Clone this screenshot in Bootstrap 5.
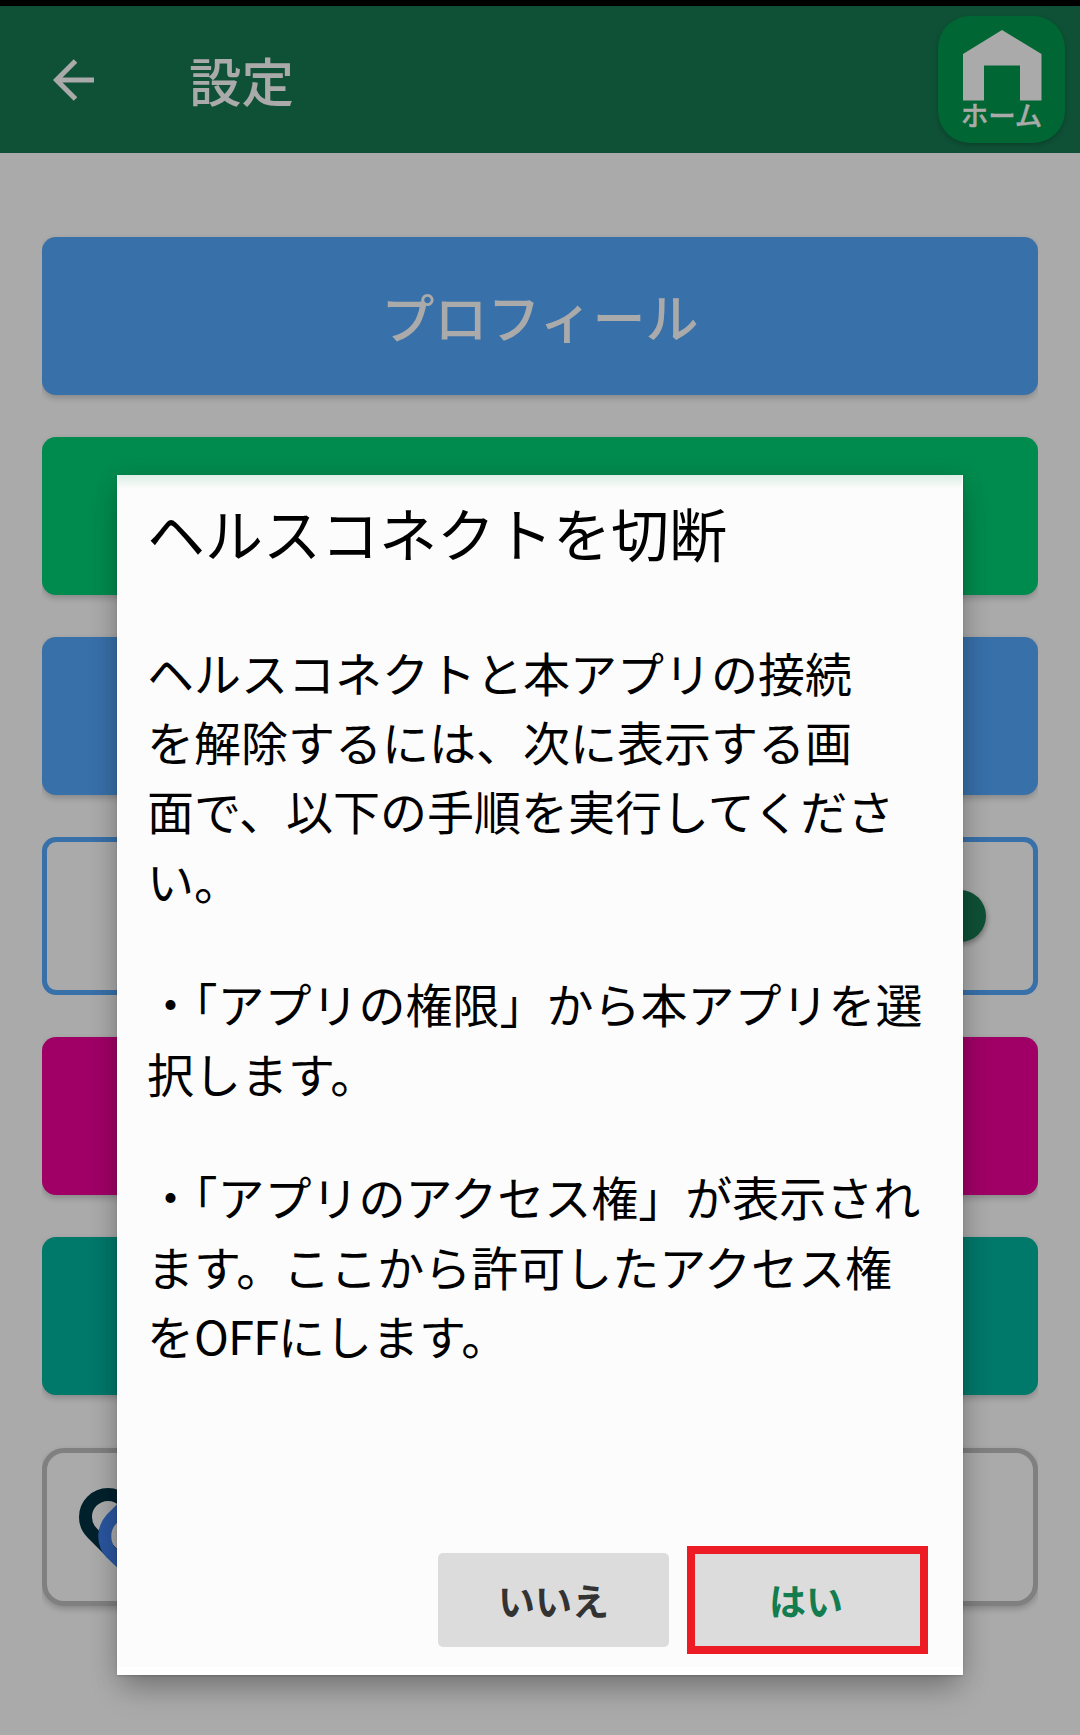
<!DOCTYPE html>
<html lang="ja">
<head>
<meta charset="utf-8">
<meta name="viewport" content="width=device-width, initial-scale=1">
<title>設定</title>
<link href="https://cdn.jsdelivr.net/npm/bootstrap@5.3.0/dist/css/bootstrap.min.css" rel="stylesheet">
<style>
body{font-family:"Noto Sans CJK JP",sans-serif;background:#aaa;height:1735px;overflow:hidden}
.status-strip{height:6px;background:#000}
.app-bar{height:147px;background:#0f5136;color:#aaa;padding:10px 15px 10px 52px}
.app-title{font-size:52.5px;line-height:60px;font-weight:500;margin-left:95px;padding-bottom:1px}
.home-btn{width:127px;height:127px;border-radius:32px;background:#063;box-shadow:0 2px 5px rgba(0,0,0,.22);color:#aaa}
.home-btn svg{margin-top:14px;display:block}
.home-label{font-size:27.5px;line-height:26px;font-weight:500;-webkit-text-stroke:.4px #aaa}
.menu-list{padding:84px 42px 0;gap:42px}
.menu-item{height:158px;border-radius:14px;box-shadow:0 3px 6px rgba(0,0,0,.2);clip-path:inset(-12px 0 -14px 0);color:#aaa;font-size:53px;font-weight:500;border:0;padding-top:3px}
.tone-blue{background:#3870a9}
.tone-green{background:#008b4e}
.tone-pink{background:#a00066}
.tone-teal{background:#00786a}
.toggle-row{border:5px solid #3870a9;box-shadow:none;padding:0 47px 0 0}
.knob{width:52px;height:52px;border-radius:50%;background:#0f5136;box-shadow:1px 3px 5px rgba(0,0,0,.3)}
.health-row{border:5px solid gray;border-radius:22px;margin-top:11px;padding:0 0 0 31px;background:#aaa}
.dialog-box{left:117px;top:475px;width:846px;height:1200px;background:#fcfcfc;color:#000;border:1px solid #fff;border-top:0;border-bottom:8px solid #fff;box-shadow:0 18px 30px -6px rgba(0,0,0,.26),0 4px 26px rgba(0,10,5,.14),0 1px 2px rgba(0,0,0,.15);padding:22px 34px 13px 29px}
.dialog-glow{height:14px;background:linear-gradient(#dceee5,#fcfcfc)}
.dialog-title{font-size:58px;line-height:70px;font-weight:400;margin-bottom:70px}
.dialog-text p{font-size:47px;line-height:69.2px;margin-bottom:54.6px;white-space:nowrap}
.latin{letter-spacing:-.9px}
.dialog-actions{gap:18px}
.dlg-btn{width:231px;height:94px;background:#dcdcdc;border-radius:5px;font-size:37px;font-weight:700;color:#333;border:0;padding:2px 0 0}
.dlg-btn.confirm{width:241px;height:108px;border:8px solid #ed1c24;border-radius:0;color:#147d50;padding:2px 3px 0 0}
</style>
</head>
<body>
<div class="status-strip"></div>
<header class="app-bar d-flex align-items-center">
  <svg width="42" height="42" viewBox="0 0 42 42" fill="none" stroke="#aaa" stroke-width="5"><path d="M42.500 21H4M23.500 2 4.500 21l19 19"/></svg>
  <h1 class="app-title mb-0">設定</h1>
  <div class="home-btn ms-auto d-flex flex-column align-items-center">
    <svg width="80" height="71" viewBox="0 0 80 71" fill="#aaa"><path d="M40 0 79.500 24V70.500H58V35.500H22V70.500H1V24Z"/></svg>
    <span class="home-label">ホーム</span>
  </div>
</header>
<main class="menu-list d-flex flex-column">
  <button class="menu-item tone-blue">プロフィール</button>
  <div class="menu-item tone-green"></div>
  <div class="menu-item tone-blue"></div>
  <div class="menu-item toggle-row d-flex align-items-center justify-content-end"><span class="knob"></span></div>
  <div class="menu-item tone-pink"></div>
  <div class="menu-item tone-teal"></div>
  <div class="menu-item health-row d-flex align-items-center">
    <svg width="100" height="80" viewBox="0 0 100 80" fill="none" stroke-width="13"><path stroke="#00212c" d="M46 14A22.500 22.500 0 0 0 14.100 45.900L40 72"/><path stroke="#2a569f" d="M60 5.600 33.300 32.300A25 25 0 0 0 33.300 66L46 78"/></svg>
  </div>
</main>
<section class="dialog-box position-absolute d-flex flex-column" role="dialog">
  <div class="dialog-glow position-absolute top-0 start-0 w-100"></div>
  <h2 class="dialog-title position-relative">ヘルスコネクトを切断</h2>
  <div class="dialog-text">
    <p>ヘルスコネクトと本アプリの接続<br>を解除するには、次に表示する画<br>面で、以下の手順を実行してくださ<br>い。</p>
    <p>・「アプリの権限」から本アプリを選<br>択します。</p>
    <p>・「アプリのアクセス権」が表示され<br>ます。ここから許可したアクセス権<br>を<span class="latin">OFF</span>にします。</p>
  </div>
  <div class="dialog-actions d-flex justify-content-end align-items-center mt-auto">
    <button class="dlg-btn">いいえ</button>
    <button class="dlg-btn confirm">はい</button>
  </div>
</section>
<script src="https://cdn.jsdelivr.net/npm/bootstrap@5.3.0/dist/js/bootstrap.bundle.min.js"></script>
</body>
</html>
